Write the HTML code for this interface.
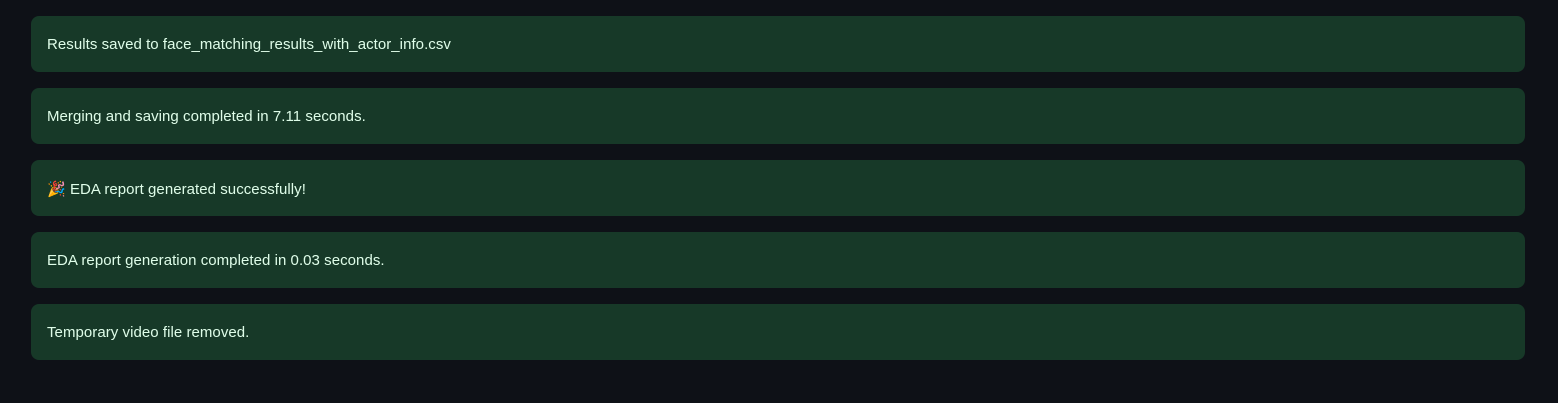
<!DOCTYPE html>
<html><head><style>
html,body{margin:0;padding:0;background:#0e1117;width:1558px;height:403px;overflow:hidden}
.b{position:absolute;left:31px;width:1494px;height:56px;background:#173928;border-radius:8px;color:#dffde9;font-family:"Liberation Sans",sans-serif;font-size:15px;line-height:58px;padding-left:16px;box-sizing:border-box;letter-spacing:0.05px}
</style></head><body>
<div class="b" style="top:16px">Results saved to face_matching_results_with_actor_info.csv</div>
<div class="b" style="top:88px">Merging and saving completed in 7.11 seconds.</div>
<div class="b" style="top:160px"><span style="font-family:'DejaVu Sans',sans-serif;font-size:15px">🎉</span> EDA report generated successfully!</div>
<div class="b" style="top:232px">EDA report generation completed in 0.03 seconds.</div>
<div class="b" style="top:304px">Temporary video file removed.</div>
</body></html>
